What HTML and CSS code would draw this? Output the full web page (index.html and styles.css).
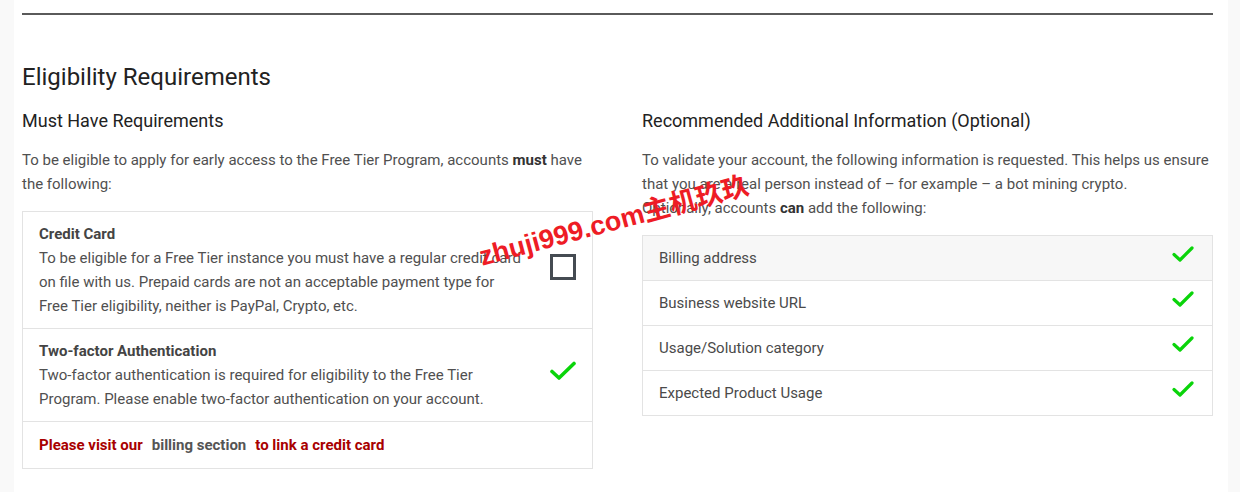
FILE: index.html
```html
<!DOCTYPE html>
<html>
<head>
<meta charset="utf-8">
<link rel="stylesheet" href="styles.css">
</head>
<body>
<div class="page">
  <hr class="rule">
  <h1 class="title">Eligibility Requirements</h1>
  <div class="cols">
    <section class="col">
      <h2 class="sub">Must Have Requirements</h2>
      <p class="intro">To be eligible to apply for early access to the Free Tier Program, accounts <b>must</b> have the following:</p>
      <div class="box">
        <div class="req">
          <div class="req-text">
            <div class="req-title">Credit Card</div>
            <div>To be eligible for a Free Tier instance you must have a regular credit card on file with us. Prepaid cards are not an acceptable payment type for Free Tier eligibility, neither is PayPal, Crypto, etc.</div>
          </div>
          <div class="req-icon"><span class="checkbox"></span></div>
        </div>
        <div class="req">
          <div class="req-text">
            <div class="req-title">Two-factor Authentication</div>
            <div>Two-factor authentication is required for eligibility to the Free Tier Program. Please enable two-factor authentication on your account.</div>
          </div>
          <div class="req-icon">
            <svg class="check big" viewBox="0 0 26 20"><path d="M2 10.5 L9 17 L24 2.5" fill="none" stroke="#0ad40a" stroke-width="3.6" stroke-linecap="round" stroke-linejoin="round"/></svg>
          </div>
        </div>
        <div class="req link-row">
          <span class="red">Please visit our</span><span class="gap"></span><span class="grey">billing section</span><span class="gap"></span><span class="red">to link a credit card</span>
        </div>
      </div>
    </section>
    <section class="col">
      <h2 class="sub">Recommended Additional Information (Optional)</h2>
      <p class="intro">To validate your account, the following information is requested. This helps us ensure that you are a real person instead of – for example – a bot mining crypto.<br>Optionally, accounts <b>can</b> add the following:</p>
      <div class="box">
        <div class="opt shaded"><span>Billing address</span><svg class="check" viewBox="0 0 22 18"><path d="M2 9.5 L8 15 L20 3" fill="none" stroke="#0ad40a" stroke-width="3.2" stroke-linecap="round" stroke-linejoin="round"/></svg></div>
        <div class="opt"><span>Business website URL</span><svg class="check" viewBox="0 0 22 18"><path d="M2 9.5 L8 15 L20 3" fill="none" stroke="#0ad40a" stroke-width="3.2" stroke-linecap="round" stroke-linejoin="round"/></svg></div>
        <div class="opt"><span>Usage/Solution category</span><svg class="check" viewBox="0 0 22 18"><path d="M2 9.5 L8 15 L20 3" fill="none" stroke="#0ad40a" stroke-width="3.2" stroke-linecap="round" stroke-linejoin="round"/></svg></div>
        <div class="opt"><span>Expected Product Usage</span><svg class="check" viewBox="0 0 22 18"><path d="M2 9.5 L8 15 L20 3" fill="none" stroke="#0ad40a" stroke-width="3.2" stroke-linecap="round" stroke-linejoin="round"/></svg></div>
      </div>
    </section>
  </div>
  <div class="watermark">zhuji999.com主机玖玖</div>
</div>
</body>
</html>
```

FILE: styles.css
```css
html, body {
  margin: 0;
  padding: 0;
}
body {
  background: #f9f9f9;
  font-family: Roboto, "Liberation Sans", "Noto Sans CJK SC", sans-serif;
  color: #4a4a4a;
  font-size: 15px;
  line-height: 24px;
}
.page {
  position: relative;
  background: #fff;
  margin: 0 12px 0 14px;
  padding: 13px 15px 24px 8px;
  min-height: 455px;
}
.rule {
  margin: 0;
  border: 0;
  height: 2px;
  background: #5a5a5a;
}
.title {
  margin: 46px 0 0 0;
  font-size: 24px;
  font-weight: 400;
  line-height: 32px;
  color: #222;
}
.cols {
  display: grid;
  grid-template-columns: 571px 571px;
  column-gap: 49px;
  margin-top: 16px;
}
.sub {
  margin: 0;
  font-size: 18px;
  font-weight: 400;
  line-height: 24px;
  color: #222;
}
.intro {
  margin: 15px 0 15px 0;
  color: #505050;
}
.intro b {
  color: #333;
  font-weight: 700;
}
.box {
  border: 1px solid #e3e3e3;
}
.req {
  display: flex;
  align-items: center;
  padding: 10px 16px 10px 16px;
  border-top: 1px solid #e3e3e3;
}
.req:first-child {
  border-top: 0;
}
.req-text {
  width: 484px;
  color: #505050;
}
.req-title {
  font-weight: 700;
  color: #444;
}
.req-icon {
  flex: 1;
  display: flex;
  justify-content: flex-end;
}
.checkbox {
  display: block;
  width: 20px;
  height: 20px;
  border: 3px solid #454b52;
  margin-top: -6px;
}
.check {
  width: 22px;
  height: 18px;
  display: block;
}
.check.big {
  width: 26px;
  height: 20px;
  margin-right: 0;
  margin-top: -8px;
}
.link-row {
  display: block;
  font-weight: 700;
  padding-top: 11px;
  padding-bottom: 11px;
}
.gap {
  display: inline-block;
  width: 9px;
}
.red {
  color: #a80000;
}
.grey {
  color: #555;
}
.opt {
  display: flex;
  align-items: center;
  justify-content: space-between;
  height: 44px;
  padding: 0 18px 0 16px;
  border-top: 1px solid #e3e3e3;
  color: #4a4a4a;
}
.opt:first-child {
  border-top: 0;
}
.opt .check {
  margin-top: -8px;
}
.shaded {
  background: #f7f7f7;
}
.watermark {
  position: absolute;
  left: 466px;
  top: 242px;
  font-family: "Liberation Sans", "Noto Sans CJK SC", sans-serif;
  font-weight: 700;
  font-size: 27px;
  line-height: 30px;
  color: #ee1c25;
  white-space: nowrap;
  transform: rotate(-15deg);
  transform-origin: 0 50%;
  pointer-events: none;
}
```
